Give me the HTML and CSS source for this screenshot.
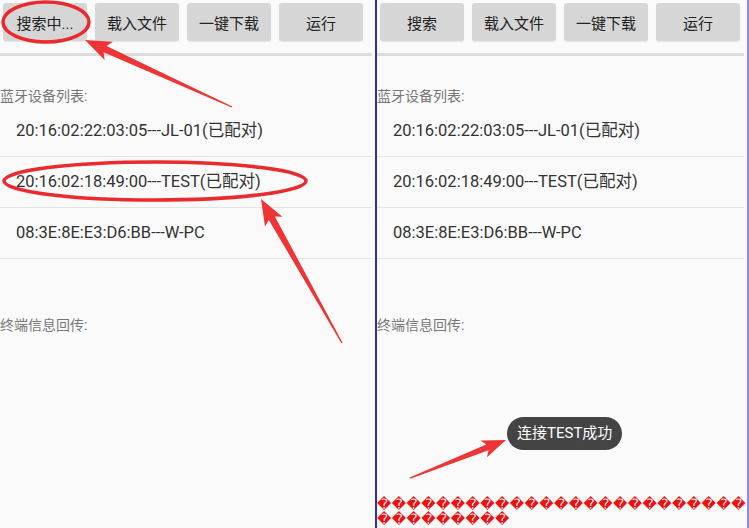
FILE: index.html
```html
<!DOCTYPE html>
<html>
<head>
<meta name="viewport" content="width=device-width, initial-scale=1">
<title>蓝牙下载</title>
<link rel="stylesheet" href="styles.css">
</head>
<body>

<div class="page">
  <!-- before connecting -->
  <div class="screen left">
    <div class="toolbar">
      <button class="btn">搜索中...</button>
      <button class="btn">载入文件</button>
      <button class="btn">一键下载</button>
      <button class="btn">运行</button>
    </div>
    <div class="rule"></div>
    <div class="label">蓝牙设备列表:</div>
    <ul class="devices">
      <li>20:16:02:22:03:05---JL-01(已配对)</li>
      <li>20:16:02:18:49:00---TEST(已配对)</li>
      <li>08:3E:8E:E3:D6:BB---W-PC</li>
    </ul>
    <div class="label log-label">终端信息回传:</div>
  </div>

  <!-- after connecting -->
  <div class="screen right">
    <div class="toolbar">
      <button class="btn">搜索</button>
      <button class="btn">载入文件</button>
      <button class="btn">一键下载</button>
      <button class="btn">运行</button>
    </div>
    <div class="rule"></div>
    <div class="label">蓝牙设备列表:</div>
    <ul class="devices">
      <li>20:16:02:22:03:05---JL-01(已配对)</li>
      <li>20:16:02:18:49:00---TEST(已配对)</li>
      <li>08:3E:8E:E3:D6:BB---W-PC</li>
    </ul>
    <div class="label log-label">终端信息回传:</div>
    <div class="log">&#xFFFD;&#xFFFD;&#xFFFD;&#xFFFD;&#xFFFD;&#xFFFD;&#xFFFD;&#xFFFD;&#xFFFD;&#xFFFD;&#xFFFD;&#xFFFD;&#xFFFD;&#xFFFD;&#xFFFD;&#xFFFD;&#xFFFD;&#xFFFD;&#xFFFD;&#xFFFD;&#xFFFD;&#xFFFD;&#xFFFD;&#xFFFD;&#xFFFD;&#xFFFD;&#xFFFD;&#xFFFD;&#xFFFD;&#xFFFD;&#xFFFD;&#xFFFD;&#xFFFD;&#xFFFD;</div>
    <div class="toast">连接TEST成功</div>
  </div>

  <!-- red annotation marks drawn over the screenshots -->
  <svg class="marks" width="749" height="528" viewBox="0 0 749 528">
    <ellipse cx="46" cy="22" rx="43" ry="20" />
    <ellipse cx="155" cy="181" rx="151" ry="19" />
    <polygon points="232.3,106.4 106.5,45.9 112.9,41.7 85,40 104.6,59.9 103.6,52.3 231.7,107.6" />
    <polygon points="342.6,342.7 274.9,216.5 282.4,216.8 261,199 265.0,226.6 268.8,219.9 341.4,343.3" />
    <polygon points="410.3,478.7 488.5,450.2 487.0,457.2 506,440 480.4,440.4 486.3,444.6 409.7,477.4" />
  </svg>
</div>

</body>
</html>
```

FILE: styles.css
```css
body {
    margin: 0;
    background-color: #fafafa;
    font-family: Roboto, "Noto Sans CJK SC", sans-serif;
}

.page {
    position: relative;
    display: flex;
    width: 749px;
    height: 528px;
    overflow: hidden;
}

/* One phone screen */
.screen {
    position: relative;
    display: flex;
    flex-direction: column;
    height: 528px;
    background-color: #fafafa;
}

.screen.left {
    width: 375px;
    border-right: 2px solid #2e2eb4;
}

.screen.right {
    width: 370px;
    border-right: 2px solid #8c8ce6;
}

.toolbar {
    display: flex;
    gap: 8px;
    padding: 3px 0 0 3px;
}

.btn {
    width: 84px;
    height: 38px;
    border: none;
    border-radius: 3px;
    background-color: #d6d6d6;
    color: #222;
    font-family: Roboto, "Noto Sans CJK SC", sans-serif;
    font-size: 15px;
    box-shadow: 0 1px 1px rgba(0,0,0,0.08);
}

.rule {
    height: 3px;
    margin: 12px 3px 0 0;
    background-color: #dcdcdc;
}

.label {
    margin-top: 30px;
    color: #777;
    font-size: 14px;
    line-height: 20px;
}

.devices {
    list-style: none;
    margin: 0;
    padding: 0;
}

.devices li {
    height: 50px;
    line-height: 50px;
    padding-left: 16px;
    margin-right: 3px;
    border-bottom: 1px solid #e4e4e4;
    color: #333;
    font-size: 16.5px;
}

.log-label {
    margin-top: 56px;
}

.log {
    margin-top: auto;
    margin-bottom: 1px;
    color: #ee1010;
    font-family: "DejaVu Sans", sans-serif;
    font-size: 14px;
    line-height: 15px;
    letter-spacing: 0.4px;
    word-break: break-all;
}

/* Android toast */
.toast {
    position: absolute;
    left: 130px;
    top: 417px;
    padding: 0 10px;
    height: 33px;
    line-height: 33px;
    border-radius: 17px;
    background-color: #444;
    color: #fff;
    font-size: 15px;
}

.marks {
    position: absolute;
    left: 0;
    top: 0;
    pointer-events: none;
}

.marks ellipse {
    fill: none;
    stroke: #ea2a2e;
    stroke-width: 3.5;
}

.marks polygon {
    fill: #ee3434;
}
```
